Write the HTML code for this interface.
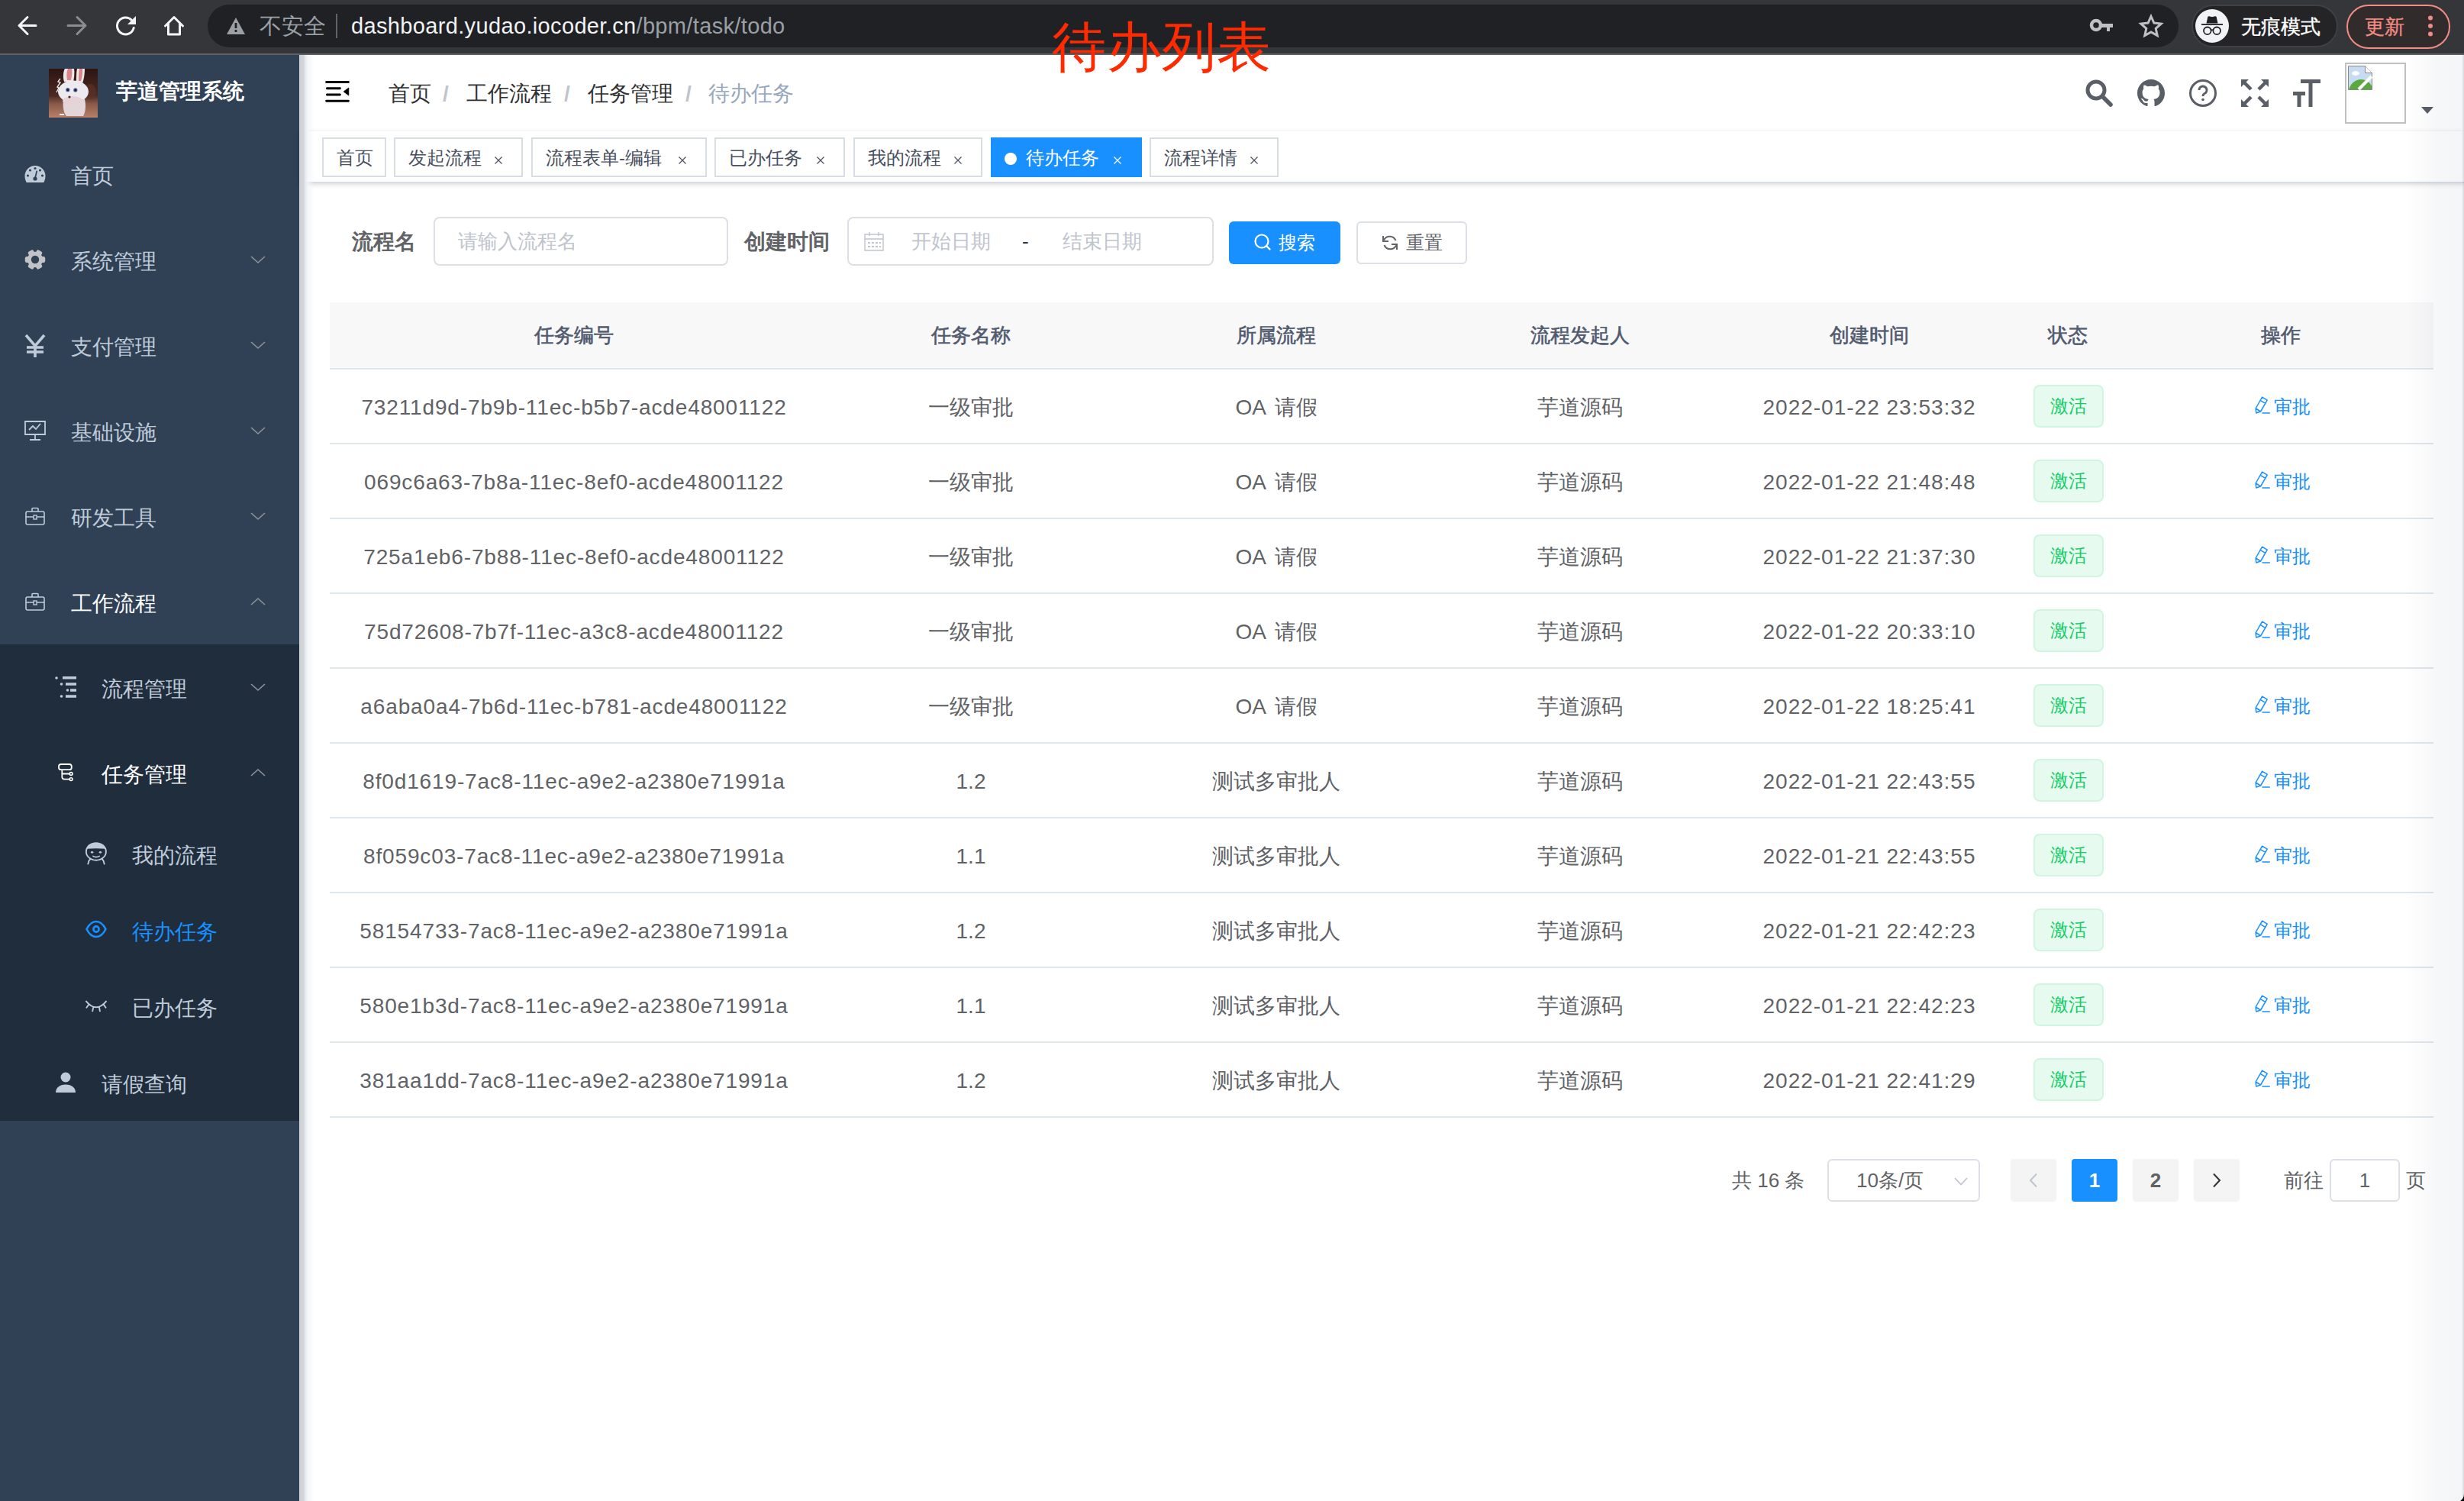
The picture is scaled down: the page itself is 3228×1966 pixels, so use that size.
<!DOCTYPE html>
<html><head><meta charset="utf-8">
<style>
*{box-sizing:border-box}
html,body{margin:0;padding:0}
body{width:3228px;height:1966px;position:relative;overflow:hidden;background:#fff;font-family:"Liberation Sans",sans-serif;color:#606266}
.a{position:absolute;white-space:nowrap}
svg{position:absolute;overflow:visible}
/* chrome */
#tb{left:0;top:0;width:3228px;height:70px;background:#35363a}
#tbl{left:0;top:70px;width:3228px;height:2px;background:#5f6064}
#omni{left:272px;top:6px;width:2582px;height:56px;border-radius:28px;background:#202124}
/* sidebar */
#side{left:0;top:72px;width:392px;height:1894px;background:#304156}
#sub{left:0;top:844px;width:392px;height:624px;background:#1f2d3d}
#sideshadow{left:392px;top:72px;width:20px;height:1894px;z-index:5;background:linear-gradient(to right,#cdd0d4 0px,#d3d6da 6px,#e6e9ee 8px,rgba(242,244,247,.8) 11px,rgba(255,255,255,0) 20px)}
.mi{font-size:28px;color:#bfcbd9;line-height:40px}
.chev{width:20px;height:10px}
/* navbar */
.bc{font-size:28px;color:#303133;line-height:40px;top:103px}
.sep{font-size:28px;color:#c0c4cc;line-height:40px;top:103px;font-weight:700}
.ni{color:#5a5e66}
/* tags */
#tagbar{left:392px;top:172px;width:2836px;height:68px;background:#fff;border-bottom:2px solid #d8dce5;box-shadow:0 2px 6px 0 rgba(0,0,0,.12),0 0 6px 0 rgba(0,0,0,.04)}
#navsh{left:392px;top:72px;width:2836px;height:100px;background:#fff;box-shadow:0 2px 2px rgba(0,21,41,.05)}
.tag{position:absolute;top:180px;height:52px;border:2px solid #d8dce5;background:#fff;color:#495060;font-size:24px;line-height:50px;padding-left:17px;white-space:nowrap}
.tag .x{position:absolute;font-size:22px;top:0}
/* form */
.lbl{font-size:28px;color:#606266;line-height:40px;-webkit-text-stroke:1px #606266}
.inp{border:2px solid #dcdfe6;border-radius:8px;background:#fff}
.ph{font-size:26px;color:#c0c4cc;line-height:40px}
/* table */
.th{font-size:26px;color:#515a6e;line-height:40px;text-align:center;-webkit-text-stroke:0.6px #515a6e}
.td{font-size:28px;color:#606266;line-height:40px;text-align:center}
.hl{height:2px;background:#dfe6ec;left:432px;width:2756px}
.stag{position:absolute;width:92px;height:56px;border:2px solid #d0f5e0;background:#e7faf0;border-radius:8px;color:#13ce66;font-size:24px;line-height:52px;text-align:center}
.op{color:#1890ff;font-size:24px;line-height:38px}
</style></head><body>

<!-- ===== Browser chrome ===== -->
<div class="a" id="tb"></div>
<div class="a" id="tbl"></div>
<!-- back -->
<svg style="left:21px;top:19px" width="30" height="30" viewBox="0 0 30 30"><path d="M26 14.5H4.5M15 3.5L4 14.5l11 11" fill="none" stroke="#f4f5f6" stroke-width="3" stroke-linecap="round" stroke-linejoin="round"/></svg>
<!-- forward -->
<svg style="left:85px;top:19px" width="30" height="30" viewBox="0 0 30 30"><path d="M4 14.5h21.5M16 3.5l11 11-11 11" fill="none" stroke="#8c8d90" stroke-width="3" stroke-linecap="round" stroke-linejoin="round"/></svg>
<!-- reload -->
<svg style="left:150px;top:18px" width="30" height="30" viewBox="0 0 30 30"><path d="M23 9A11 11 0 1 0 25.2 18.5" fill="none" stroke="#f4f5f6" stroke-width="3" stroke-linecap="round"/><path d="M28 3v11H17z" fill="#f4f5f6"/></svg>
<!-- home -->
<svg style="left:214px;top:20px" width="30" height="30" viewBox="0 0 30 30"><path d="M2.5 14L14 2.5 25.5 14M6.5 11v14h15V11" fill="none" stroke="#f4f5f6" stroke-width="3" stroke-linecap="round" stroke-linejoin="round"/></svg>
<div class="a" id="omni"></div>
<!-- warning -->
<svg style="left:296px;top:22px" width="26" height="24" viewBox="0 0 26 24"><path d="M13 1L25 23H1z" fill="#9aa0a6"/><rect x="11.6" y="8" width="2.8" height="7" fill="#202124"/><rect x="11.6" y="17" width="2.8" height="3" fill="#202124"/></svg>
<div class="a" style="left:340px;top:14px;font-size:29px;line-height:40px;color:#9aa0a6">不安全</div>
<div class="a" style="left:440px;top:18px;width:2px;height:32px;background:#5f6368"></div>
<div class="a" style="left:460px;top:14px;font-size:29px;line-height:40px;color:#f1f3f4;letter-spacing:0.35px">dashboard.yudao.iocoder.cn<span style="color:#9aa0a6">/bpm/task/todo</span></div>
<!-- key -->
<svg style="left:2738px;top:24px" width="32" height="18" viewBox="0 0 32 18"><circle cx="8" cy="9" r="6" fill="none" stroke="#bdc1c6" stroke-width="4.5"/><path d="M13 7h17v5h-4v5h-4v-5h-9z" fill="#bdc1c6"/></svg>
<!-- star -->
<svg style="left:2802px;top:19px" width="32" height="30" viewBox="0 0 32 30"><path d="M16 2.5l3.9 8.6 9.3 1-7 6.3 2 9.2L16 22.9l-8.2 4.7 2-9.2-7-6.3 9.3-1z" fill="none" stroke="#bdc1c6" stroke-width="3" stroke-linejoin="miter"/></svg>
<!-- incognito pill -->
<div class="a" style="left:2871px;top:6px;width:192px;height:56px;border-radius:28px;background:#242427;border:2px solid #3f4043"></div>
<div class="a" style="left:2876px;top:12px;width:44px;height:44px;border-radius:22px;background:#f1f3f4"></div>
<svg style="left:2876px;top:12px" width="44" height="44" viewBox="0 0 44 44"><path d="M14.5 18.5l1.8-8.3c.2-.8.9-1.2 1.7-1l3 .8c.6.2 1.4.2 2 0l3-.8c.8-.2 1.5.2 1.7 1l1.8 8.3z" fill="#202124"/><rect x="8" y="19.2" width="28" height="1.8" fill="#202124"/><circle cx="15.8" cy="28.3" r="4.8" fill="none" stroke="#202124" stroke-width="1.8"/><circle cx="28.2" cy="28.3" r="4.8" fill="none" stroke="#202124" stroke-width="1.8"/><path d="M20.6 27.5q1.4-1 2.8 0" fill="none" stroke="#202124" stroke-width="1.6"/></svg>
<div class="a" style="left:2936px;top:15px;font-size:26px;line-height:40px;color:#fff;-webkit-text-stroke:0.4px #fff">无痕模式</div>
<!-- update pill -->
<div class="a" style="left:3074px;top:6px;width:136px;height:58px;border-radius:29px;background:#322b2c;border:2.5px solid #f28b82"></div>
<div class="a" style="left:3098px;top:15px;font-size:26px;line-height:40px;color:#f28b82;-webkit-text-stroke:0.3px #f28b82">更新</div>
<svg style="left:3178px;top:19px" width="12" height="30" viewBox="0 0 12 30"><circle cx="6" cy="4.5" r="3" fill="#f28b82"/><circle cx="6" cy="15" r="3" fill="#f28b82"/><circle cx="6" cy="25.5" r="3" fill="#f28b82"/></svg>

<!-- ===== Sidebar ===== -->
<div class="a" id="side"></div>
<div class="a" id="sub"></div>
<div class="a" id="sideshadow"></div>
<!-- logo -->
<svg style="left:64px;top:90px" width="64" height="64" viewBox="0 0 64 64"><defs><linearGradient id="lg" x1="0" y1="0" x2="0" y2="1"><stop offset="0" stop-color="#2e1512"/><stop offset=".55" stop-color="#4a2a22"/><stop offset=".72" stop-color="#8a5a48"/><stop offset="1" stop-color="#b98068"/></linearGradient></defs><rect width="64" height="64" fill="url(#lg)"/><ellipse cx="54" cy="30" rx="8" ry="10" fill="#5a3228" opacity=".7"/><path d="M20 17c-2-6-1-14 1-17h12c1 5 0 12-1 18z" fill="#ece8ea"/><path d="M24 15c-1-5-1-11 1-15h5c1 4 0 10-1 15z" fill="#d9858a"/><path d="M36 18c0-6 0-14 1-18h10c0 6-1 14-3 19z" fill="#ece8ea"/><path d="M39 16c0-5 0-11 1-16h4c0 5 0 11-2 16z" fill="#d9858a"/><ellipse cx="32" cy="30" rx="20" ry="14.5" fill="#eceaee"/><path d="M19 40c-1 8 0 18 4 22h22c3-5 4-14 2-22z" fill="#e3d6da"/><ellipse cx="31" cy="42" rx="13" ry="6" fill="#e5d3d7"/><circle cx="24.8" cy="27.7" r="2.6" fill="#4b6a9a"/><circle cx="24.8" cy="27.7" r="1.5" fill="#1a1a2a"/><circle cx="34.8" cy="27.9" r="2.6" fill="#4b6a9a"/><circle cx="34.8" cy="27.9" r="1.5" fill="#1a1a2a"/><circle cx="27" cy="37" r="1.6" fill="#5a2222"/><path d="M15 13l-3 4 3 1-4 6 2 1-3 6" fill="none" stroke="#e8e8e8" stroke-width="1.4"/><path d="M14 60h6" stroke="#eee" stroke-width="2"/></svg>
<div class="a" style="left:152px;top:100px;font-size:28px;line-height:40px;color:#fff;-webkit-text-stroke:0.9px #fff">芋道管理系统</div>

<!-- menu items -->
<!-- 首页 -->
<svg style="left:32px;top:216px" width="28" height="24" viewBox="0 0 28 24"><path d="M14 1A13.5 13.5 0 0 0 .5 14.5c0 3 .8 5.8 2.2 8.5h22.6c1.4-2.7 2.2-5.5 2.2-8.5A13.5 13.5 0 0 0 14 1z" fill="#bfcbd9"/><g fill="#304156"><circle cx="4.5" cy="14" r="1.6"/><circle cx="7.5" cy="7" r="1.6"/><circle cx="14" cy="4.5" r="1.6"/><circle cx="20.5" cy="7" r="1.6"/><circle cx="23.5" cy="14" r="1.6"/><circle cx="14" cy="18" r="2.6"/><path d="M13 17.5l2.5-10 1.6.4-2.3 10z"/></g></svg>
<div class="a mi" style="left:93px;top:211px">首页</div>
<!-- 系统管理 -->
<svg style="left:32px;top:326px" width="28" height="28" viewBox="0 0 28 28"><g fill="#c2c3c6"><circle cx="14" cy="14" r="10.2"/><rect x="10" y="0.8" width="8" height="8" rx="2.2" transform="rotate(30 14 14)"/><rect x="10" y="0.8" width="8" height="8" rx="2.2" transform="rotate(90 14 14)"/><rect x="10" y="0.8" width="8" height="8" rx="2.2" transform="rotate(150 14 14)"/><rect x="10" y="0.8" width="8" height="8" rx="2.2" transform="rotate(210 14 14)"/><rect x="10" y="0.8" width="8" height="8" rx="2.2" transform="rotate(270 14 14)"/><rect x="10" y="0.8" width="8" height="8" rx="2.2" transform="rotate(330 14 14)"/></g><circle cx="14" cy="14" r="5.2" fill="#304156"/></svg>
<div class="a mi" style="left:93px;top:323px">系统管理</div>
<svg class="chev" style="left:328px;top:335px" viewBox="0 0 20 10"><path d="M1 1l9 8 9-8" fill="none" stroke="#909399" stroke-width="1.6"/></svg>
<!-- 支付管理 -->
<svg style="left:32px;top:438px" width="28" height="30" viewBox="0 0 28 30"><path d="M2 1l12 14L26 1M14 15v15M3 17h22M3 23h22" fill="none" stroke="#bfcbd9" stroke-width="3.6"/></svg>
<div class="a mi" style="left:93px;top:435px">支付管理</div>
<svg class="chev" style="left:328px;top:447px" viewBox="0 0 20 10"><path d="M1 1l9 8 9-8" fill="none" stroke="#909399" stroke-width="1.6"/></svg>
<!-- 基础设施 -->
<svg style="left:32px;top:551px" width="28" height="26" viewBox="0 0 28 26"><path d="M1 1h26v17H1zM14 18v7M7 25h14" fill="none" stroke="#bfcbd9" stroke-width="1.8"/><path d="M6 12l5-5 4 4 6-7" fill="none" stroke="#bfcbd9" stroke-width="1.8"/></svg>
<div class="a mi" style="left:93px;top:547px">基础设施</div>
<svg class="chev" style="left:328px;top:559px" viewBox="0 0 20 10"><path d="M1 1l9 8 9-8" fill="none" stroke="#909399" stroke-width="1.6"/></svg>
<!-- 研发工具 -->
<svg style="left:33px;top:664px" width="26" height="24" viewBox="0 0 26 24"><rect x="1" y="6" width="24" height="17" rx="2" fill="none" stroke="#bfcbd9" stroke-width="1.6"/><path d="M9 6V2.5a1 1 0 0 1 1-1h6a1 1 0 0 1 1 1V6M1 13h24" fill="none" stroke="#bfcbd9" stroke-width="1.6"/><rect x="11" y="11" width="4" height="5" fill="#304156" stroke="#bfcbd9" stroke-width="1.4"/></svg>
<div class="a mi" style="left:93px;top:659px">研发工具</div>
<svg class="chev" style="left:328px;top:671px" viewBox="0 0 20 10"><path d="M1 1l9 8 9-8" fill="none" stroke="#909399" stroke-width="1.6"/></svg>
<!-- 工作流程 -->
<svg style="left:33px;top:776px" width="26" height="24" viewBox="0 0 26 24"><rect x="1" y="6" width="24" height="17" rx="2" fill="none" stroke="#bfcbd9" stroke-width="1.6"/><path d="M9 6V2.5a1 1 0 0 1 1-1h6a1 1 0 0 1 1 1V6M1 13h24" fill="none" stroke="#bfcbd9" stroke-width="1.6"/><rect x="11" y="11" width="4" height="5" fill="#304156" stroke="#bfcbd9" stroke-width="1.4"/></svg>
<div class="a mi" style="left:93px;top:771px;color:#fff">工作流程</div>
<svg class="chev" style="left:328px;top:783px" viewBox="0 0 20 10"><path d="M1 9l9-8 9 8" fill="none" stroke="#909399" stroke-width="1.6"/></svg>
<!-- 流程管理 -->
<svg style="left:72px;top:886px" width="28" height="28" viewBox="0 0 28 28"><g fill="#bfcbd9"><circle cx="2" cy="2" r="1.8"/><rect x="10" y="0" width="18" height="3.5"/><circle cx="8.5" cy="10" r="1.8"/><rect x="14" y="8.3" width="14" height="3.5"/><circle cx="16.5" cy="18" r="1.8"/><rect x="20" y="16.3" width="8" height="3.5"/><circle cx="8.5" cy="26" r="1.8"/><rect x="14" y="24.3" width="14" height="3.5"/></g></svg>
<div class="a mi" style="left:133px;top:883px">流程管理</div>
<svg class="chev" style="left:328px;top:895px" viewBox="0 0 20 10"><path d="M1 1l9 8 9-8" fill="none" stroke="#909399" stroke-width="1.6"/></svg>
<!-- 任务管理 -->
<svg style="left:66px;top:990px" width="40" height="45" viewBox="0 0 40 45"><rect x="11" y="11" width="16.8" height="7.2" rx="3" fill="none" stroke="#fff" stroke-width="1.8"/><path d="M15.3 18.2v9.2q0 3.2 3.2 3.2h6.8M15.3 23.5h10" fill="none" stroke="#fff" stroke-width="1.8"/><circle cx="27.1" cy="23.5" r="1.9" fill="none" stroke="#fff" stroke-width="1.6"/><circle cx="27.1" cy="30.6" r="1.9" fill="none" stroke="#fff" stroke-width="1.6"/></svg>
<div class="a mi" style="left:133px;top:995px;color:#fff">任务管理</div>
<svg class="chev" style="left:328px;top:1007px" viewBox="0 0 20 10"><path d="M1 9l9-8 9 8" fill="none" stroke="#909399" stroke-width="1.6"/></svg>
<!-- 我的流程 -->
<svg style="left:106px;top:1095px" width="40" height="45" viewBox="0 0 40 45"><ellipse cx="19.9" cy="20.4" rx="13" ry="11.3" fill="none" stroke="#bfcbd9" stroke-width="1.9"/><path d="M7 16.8Q19.9 15.6 32.8 16.8 31 9.1 19.9 9.1 8.8 9.1 7 16.8z" fill="#bfcbd9"/><ellipse cx="14.6" cy="21.3" rx="1.7" ry="1.4" fill="#bfcbd9"/><ellipse cx="25.4" cy="21.3" rx="1.7" ry="1.4" fill="#bfcbd9"/><path d="M15.8 26.4q4.1 2.4 8.4 0" fill="none" stroke="#bfcbd9" stroke-width="1.6" stroke-linecap="round"/><path d="M12.5 29.8Q10 32 9.3 36.6M27.5 29.8Q30 32 30.7 36.6" fill="none" stroke="#bfcbd9" stroke-width="1.9" stroke-linecap="round"/></svg>
<div class="a mi" style="left:173px;top:1101px">我的流程</div>
<!-- 待办任务 -->
<svg style="left:112px;top:1205px" width="28" height="24" viewBox="0 0 28 24"><path d="M1.5 12C5 5 9.5 2 14 2s9 3 12.5 10C23 19 18.5 22 14 22S5 19 1.5 12z" fill="none" stroke="#1890ff" stroke-width="2.6"/><circle cx="14" cy="12" r="3.6" fill="none" stroke="#1890ff" stroke-width="2.6"/></svg>
<div class="a mi" style="left:173px;top:1201px;color:#1890ff">待办任务</div>
<!-- 已办任务 -->
<svg style="left:106px;top:1300px" width="40" height="40" viewBox="0 0 40 40"><path d="M7 11.6Q20 27 33 11.6M10.3 15.6L7.4 19.8M29.7 15.6l2.9 4.2M16.2 19.4l-1 5M24 19.4l.9 5" fill="none" stroke="#bfcbd9" stroke-width="1.9" stroke-linecap="round"/></svg>
<div class="a mi" style="left:173px;top:1301px">已办任务</div>
<!-- 请假查询 -->
<svg style="left:72px;top:1404px" width="28" height="28" viewBox="0 0 28 28"><circle cx="14" cy="7" r="6.5" fill="#bfcbd9"/><path d="M1 27c0-6 5-10.5 13-10.5S27 21 27 27z" fill="#bfcbd9"/></svg>
<div class="a mi" style="left:133px;top:1401px">请假查询</div>

<!-- ===== Navbar ===== -->
<div class="a" id="navsh"></div>
<svg style="left:415px;top:95px" width="55" height="50" viewBox="0 0 55 50"><path d="M12.6 12.5h28.8M13.4 20.8h17M13.4 29h17M12.6 37.3h28.8" stroke="#000" stroke-width="2.9" stroke-linecap="round"/><path d="M41.8 20v10l-6.6-5z" fill="#000" stroke="#000" stroke-width="0.8" stroke-linejoin="round"/></svg>
<div class="a bc" style="left:509px;color:#303133">首页</div>
<div class="a bc" style="left:611px;color:#303133">工作流程</div>
<div class="a bc" style="left:770px;color:#303133">任务管理</div>
<div class="a bc" style="left:928px;color:#97a8be">待办任务</div>
<div class="a sep" style="left:580px">/</div>
<div class="a sep" style="left:739px">/</div>
<div class="a sep" style="left:898px">/</div>
<svg style="left:2732px;top:104px" width="36" height="36" viewBox="0 0 36 36"><circle cx="14" cy="14" r="11" fill="none" stroke="#5a5e66" stroke-width="5"/><path d="M22 22l11 11" stroke="#5a5e66" stroke-width="5.5" stroke-linecap="round"/></svg>
<svg style="left:2800px;top:104px" width="36" height="36" viewBox="0 0 16 16"><path fill="#5a5e66" d="M8 0C3.58 0 0 3.58 0 8c0 3.54 2.29 6.53 5.47 7.59.4.07.55-.17.55-.38 0-.19-.01-.82-.01-1.49-2.01.37-2.53-.49-2.69-.94-.09-.23-.48-.94-.82-1.13-.28-.15-.68-.52-.01-.53.63-.01 1.08.58 1.23.82.72 1.21 1.87.87 2.33.66.07-.52.28-.87.51-1.07-1.78-.2-3.64-.89-3.64-3.95 0-.87.31-1.59.82-2.15-.08-.2-.36-1.02.08-2.12 0 0 .67-.21 2.2.82.64-.18 1.32-.27 2-.27.68 0 1.36.09 2 .27 1.53-1.04 2.2-.82 2.2-.82.44 1.1.16 1.92.08 2.12.51.56.82 1.27.82 2.15 0 3.07-1.87 3.75-3.65 3.95.29.25.54.73.54 1.48 0 1.07-.01 1.93-.01 2.2 0 .21.15.46.55.38A8.013 8.013 0 0 0 16 8c0-4.42-3.58-8-8-8z"/></svg>
<svg style="left:2868px;top:104px" width="36" height="36" viewBox="0 0 36 36"><circle cx="18" cy="18" r="16.5" fill="none" stroke="#5a5e66" stroke-width="3"/><path d="M13 14a5 5 0 1 1 7 4.5c-1.5.8-2 1.5-2 3.5" fill="none" stroke="#5a5e66" stroke-width="3"/><circle cx="18" cy="26.5" r="1.8" fill="#5a5e66"/></svg>
<svg style="left:2936px;top:104px" width="36" height="36" viewBox="0 0 36 36"><g fill="#5a5e66"><path d="M0 0h10L0 10z"/><path d="M36 0H26l10 10z"/><path d="M0 36h10L0 26z"/><path d="M36 36H26l10-10z"/></g><g stroke="#5a5e66" stroke-width="4.5"><path d="M3 3l10 10M33 3L23 13M3 33l10-10M33 33L23 23"/></g></svg>
<svg style="left:3004px;top:104px" width="36" height="36" viewBox="0 0 36 36"><g fill="#5a5e66"><rect x="10" y="0" width="26" height="5"/><rect x="20.5" y="0" width="5" height="36"/><rect x="0" y="16" width="16" height="5"/><rect x="5.5" y="16" width="5" height="20"/></g></svg>
<div class="a" style="left:3072px;top:82px;width:80px;height:80px;border:2px solid #c0c0c0;background:#fff"></div>
<svg style="left:3076px;top:86px" width="32" height="32" viewBox="0 0 32 32"><path d="M.5.5h22l9 9v22H.5z" fill="#c7dcf2" stroke="#8a8a8a" stroke-width="1"/><path d="M22.5.5v9h9" fill="#fff" stroke="#8a8a8a" stroke-width="1"/><path d="M1 31c3-8 9-13 16-13s12 4 14 9v4z" fill="#5aa93e"/><path d="M31 14L14 31" stroke="#fff" stroke-width="4"/><ellipse cx="10" cy="10" rx="5" ry="3" fill="#fff"/></svg>
<svg style="left:3172px;top:140px" width="16" height="9" viewBox="0 0 16 9"><path d="M0 0h16L8 9z" fill="#5a5e66"/></svg>
<!-- ===== Tags ===== -->
<div class="a" id="tagbar"></div>
<div class="tag" style="left:422px;width:84px;">首页</div>
<div class="tag" style="left:516px;width:169px;">发起流程<svg style="left:130px;top:23px" width="10" height="10" viewBox="0 0 10 10"><path d="M.5.5l9 9M9.5.5l-9 9" stroke="currentColor" stroke-width="1.15"/></svg></div>
<div class="tag" style="left:696px;width:230px;">流程表单-编辑<svg style="left:191px;top:23px" width="10" height="10" viewBox="0 0 10 10"><path d="M.5.5l9 9M9.5.5l-9 9" stroke="currentColor" stroke-width="1.15"/></svg></div>
<div class="tag" style="left:936px;width:171px;">已办任务<svg style="left:132px;top:23px" width="10" height="10" viewBox="0 0 10 10"><path d="M.5.5l9 9M9.5.5l-9 9" stroke="currentColor" stroke-width="1.15"/></svg></div>
<div class="tag" style="left:1118px;width:169px;">我的流程<svg style="left:130px;top:23px" width="10" height="10" viewBox="0 0 10 10"><path d="M.5.5l9 9M9.5.5l-9 9" stroke="currentColor" stroke-width="1.15"/></svg></div>
<div class="tag" style="left:1298px;width:198px;background:#1890ff;border-color:#1890ff;color:#fff;padding-left:44px;"><span style="position:absolute;left:16px;top:18px;width:16px;height:16px;border-radius:8px;background:#fff"></span>待办任务<svg style="left:159px;top:23px" width="10" height="10" viewBox="0 0 10 10"><path d="M.5.5l9 9M9.5.5l-9 9" stroke="currentColor" stroke-width="1.15"/></svg></div>
<div class="tag" style="left:1506px;width:169px;">流程详情<svg style="left:130px;top:23px" width="10" height="10" viewBox="0 0 10 10"><path d="M.5.5l9 9M9.5.5l-9 9" stroke="currentColor" stroke-width="1.15"/></svg></div>
<!-- ===== Form ===== -->
<div class="a lbl" style="left:461px;top:297px">流程名</div>
<div class="a inp" style="left:568px;top:284px;width:386px;height:64px"></div>
<div class="a ph" style="left:600px;top:296px">请输入流程名</div>
<div class="a lbl" style="left:975px;top:297px">创建时间</div>
<div class="a inp" style="left:1110px;top:284px;width:480px;height:64px"></div>
<svg style="left:1132px;top:303px" width="26" height="26" viewBox="0 0 26 26"><path d="M1 4h24v21H1zM1 10h24M7 1v5M19 1v5" fill="none" stroke="#c0c4cc" stroke-width="1.4"/><g fill="#c0c4cc"><rect x="5" y="14" width="3" height="2"/><rect x="10" y="14" width="3" height="2"/><rect x="15" y="14" width="3" height="2"/><rect x="20" y="14" width="2" height="2"/><rect x="5" y="19" width="3" height="2"/><rect x="10" y="19" width="3" height="2"/><rect x="15" y="19" width="3" height="2"/><rect x="20" y="19" width="2" height="2"/></g></svg>
<div class="a ph" style="left:1194px;top:296px">开始日期</div>
<div class="a" style="left:1339px;top:296px;font-size:26px;line-height:40px;color:#303133">-</div>
<div class="a ph" style="left:1392px;top:296px">结束日期</div>
<div class="a" style="left:1610px;top:290px;width:146px;height:56px;border-radius:6px;background:#1890ff"></div>
<svg style="left:1643px;top:306px" width="22" height="22" viewBox="0 0 22 22"><circle cx="10" cy="10" r="8.5" fill="none" stroke="#fff" stroke-width="2.2"/><path d="M16 16l4.5 4.5" stroke="#fff" stroke-width="2.4" stroke-linecap="round"/></svg>
<div class="a" style="left:1675px;top:298px;font-size:24px;line-height:40px;color:#fff">搜索</div>
<div class="a" style="left:1777px;top:290px;width:145px;height:56px;border-radius:6px;background:#fff;border:2px solid #dcdfe6"></div>
<svg style="left:1810px;top:307px" width="22" height="22" viewBox="0 0 22 22"><path d="M18.5 8A8.5 8.5 0 0 0 3 7.5M3.5 14a8.5 8.5 0 0 0 15.5.5" fill="none" stroke="#606266" stroke-width="2"/><path d="M2 2v7h7" fill="none" stroke="#606266" stroke-width="2"/><path d="M20 20v-7h-7" fill="none" stroke="#606266" stroke-width="2"/></svg>
<div class="a" style="left:1842px;top:298px;font-size:24px;line-height:40px;color:#606266">重置</div>
<!-- ===== Table ===== -->
<div class="a" style="left:432px;top:396px;width:2756px;height:86px;background:#f8f8f9"></div>
<div class="a hl" style="top:482px"></div>
<div class="a th" style="left:432px;width:640px;top:419px;">任务编号</div>
<div class="a th" style="left:1072px;width:400px;top:419px;">任务名称</div>
<div class="a th" style="left:1472px;width:400px;top:419px;">所属流程</div>
<div class="a th" style="left:1872px;width:396px;top:419px;">流程发起人</div>
<div class="a th" style="left:2268px;width:362px;top:419px;">创建时间</div>
<div class="a th" style="left:2630px;width:158px;top:419px;">状态</div>
<div class="a th" style="left:2788px;width:400px;top:419px;">操作</div>
<div class="a hl" style="top:580px"></div>
<div class="a td" style="left:432px;width:640px;top:514px;letter-spacing:0.86px">73211d9d-7b9b-11ec-b5b7-acde48001122</div>
<div class="a td" style="left:1072px;width:400px;top:514px;">一级审批</div>
<div class="a td" style="left:1472px;width:400px;top:514px;">OA<span style="margin-left:3px"> </span>请假</div>
<div class="a td" style="left:1872px;width:396px;top:514px;">芋道源码</div>
<div class="a td" style="left:2268px;width:362px;top:514px;letter-spacing:1px">2022-01-22 23:53:32</div>
<div class="stag" style="left:2664px;top:504px">激活</div>
<svg style="left:2945px;top:510px" width="40" height="40" viewBox="0 0 40 40"><path d="M18.6 10.2L25.2 14.2 16.6 29 10.1 25zM10.1 25l.7 6 5.8-2M16.4 14.6l6.4 3.8M18.5 31h10.3" fill="none" stroke="#1890ff" stroke-width="1.5" stroke-linejoin="round"/></svg>
<div class="a op" style="left:2979px;top:514px">审批</div>
<div class="a hl" style="top:678px"></div>
<div class="a td" style="left:432px;width:640px;top:612px;letter-spacing:0.86px">069c6a63-7b8a-11ec-8ef0-acde48001122</div>
<div class="a td" style="left:1072px;width:400px;top:612px;">一级审批</div>
<div class="a td" style="left:1472px;width:400px;top:612px;">OA<span style="margin-left:3px"> </span>请假</div>
<div class="a td" style="left:1872px;width:396px;top:612px;">芋道源码</div>
<div class="a td" style="left:2268px;width:362px;top:612px;letter-spacing:1px">2022-01-22 21:48:48</div>
<div class="stag" style="left:2664px;top:602px">激活</div>
<svg style="left:2945px;top:608px" width="40" height="40" viewBox="0 0 40 40"><path d="M18.6 10.2L25.2 14.2 16.6 29 10.1 25zM10.1 25l.7 6 5.8-2M16.4 14.6l6.4 3.8M18.5 31h10.3" fill="none" stroke="#1890ff" stroke-width="1.5" stroke-linejoin="round"/></svg>
<div class="a op" style="left:2979px;top:612px">审批</div>
<div class="a hl" style="top:776px"></div>
<div class="a td" style="left:432px;width:640px;top:710px;letter-spacing:0.86px">725a1eb6-7b88-11ec-8ef0-acde48001122</div>
<div class="a td" style="left:1072px;width:400px;top:710px;">一级审批</div>
<div class="a td" style="left:1472px;width:400px;top:710px;">OA<span style="margin-left:3px"> </span>请假</div>
<div class="a td" style="left:1872px;width:396px;top:710px;">芋道源码</div>
<div class="a td" style="left:2268px;width:362px;top:710px;letter-spacing:1px">2022-01-22 21:37:30</div>
<div class="stag" style="left:2664px;top:700px">激活</div>
<svg style="left:2945px;top:706px" width="40" height="40" viewBox="0 0 40 40"><path d="M18.6 10.2L25.2 14.2 16.6 29 10.1 25zM10.1 25l.7 6 5.8-2M16.4 14.6l6.4 3.8M18.5 31h10.3" fill="none" stroke="#1890ff" stroke-width="1.5" stroke-linejoin="round"/></svg>
<div class="a op" style="left:2979px;top:710px">审批</div>
<div class="a hl" style="top:874px"></div>
<div class="a td" style="left:432px;width:640px;top:808px;letter-spacing:0.86px">75d72608-7b7f-11ec-a3c8-acde48001122</div>
<div class="a td" style="left:1072px;width:400px;top:808px;">一级审批</div>
<div class="a td" style="left:1472px;width:400px;top:808px;">OA<span style="margin-left:3px"> </span>请假</div>
<div class="a td" style="left:1872px;width:396px;top:808px;">芋道源码</div>
<div class="a td" style="left:2268px;width:362px;top:808px;letter-spacing:1px">2022-01-22 20:33:10</div>
<div class="stag" style="left:2664px;top:798px">激活</div>
<svg style="left:2945px;top:804px" width="40" height="40" viewBox="0 0 40 40"><path d="M18.6 10.2L25.2 14.2 16.6 29 10.1 25zM10.1 25l.7 6 5.8-2M16.4 14.6l6.4 3.8M18.5 31h10.3" fill="none" stroke="#1890ff" stroke-width="1.5" stroke-linejoin="round"/></svg>
<div class="a op" style="left:2979px;top:808px">审批</div>
<div class="a hl" style="top:972px"></div>
<div class="a td" style="left:432px;width:640px;top:906px;letter-spacing:0.86px">a6aba0a4-7b6d-11ec-b781-acde48001122</div>
<div class="a td" style="left:1072px;width:400px;top:906px;">一级审批</div>
<div class="a td" style="left:1472px;width:400px;top:906px;">OA<span style="margin-left:3px"> </span>请假</div>
<div class="a td" style="left:1872px;width:396px;top:906px;">芋道源码</div>
<div class="a td" style="left:2268px;width:362px;top:906px;letter-spacing:1px">2022-01-22 18:25:41</div>
<div class="stag" style="left:2664px;top:896px">激活</div>
<svg style="left:2945px;top:902px" width="40" height="40" viewBox="0 0 40 40"><path d="M18.6 10.2L25.2 14.2 16.6 29 10.1 25zM10.1 25l.7 6 5.8-2M16.4 14.6l6.4 3.8M18.5 31h10.3" fill="none" stroke="#1890ff" stroke-width="1.5" stroke-linejoin="round"/></svg>
<div class="a op" style="left:2979px;top:906px">审批</div>
<div class="a hl" style="top:1070px"></div>
<div class="a td" style="left:432px;width:640px;top:1004px;letter-spacing:0.86px">8f0d1619-7ac8-11ec-a9e2-a2380e71991a</div>
<div class="a td" style="left:1072px;width:400px;top:1004px;">1.2</div>
<div class="a td" style="left:1472px;width:400px;top:1004px;">测试多审批人</div>
<div class="a td" style="left:1872px;width:396px;top:1004px;">芋道源码</div>
<div class="a td" style="left:2268px;width:362px;top:1004px;letter-spacing:1px">2022-01-21 22:43:55</div>
<div class="stag" style="left:2664px;top:994px">激活</div>
<svg style="left:2945px;top:1000px" width="40" height="40" viewBox="0 0 40 40"><path d="M18.6 10.2L25.2 14.2 16.6 29 10.1 25zM10.1 25l.7 6 5.8-2M16.4 14.6l6.4 3.8M18.5 31h10.3" fill="none" stroke="#1890ff" stroke-width="1.5" stroke-linejoin="round"/></svg>
<div class="a op" style="left:2979px;top:1004px">审批</div>
<div class="a hl" style="top:1168px"></div>
<div class="a td" style="left:432px;width:640px;top:1102px;letter-spacing:0.86px">8f059c03-7ac8-11ec-a9e2-a2380e71991a</div>
<div class="a td" style="left:1072px;width:400px;top:1102px;">1.1</div>
<div class="a td" style="left:1472px;width:400px;top:1102px;">测试多审批人</div>
<div class="a td" style="left:1872px;width:396px;top:1102px;">芋道源码</div>
<div class="a td" style="left:2268px;width:362px;top:1102px;letter-spacing:1px">2022-01-21 22:43:55</div>
<div class="stag" style="left:2664px;top:1092px">激活</div>
<svg style="left:2945px;top:1098px" width="40" height="40" viewBox="0 0 40 40"><path d="M18.6 10.2L25.2 14.2 16.6 29 10.1 25zM10.1 25l.7 6 5.8-2M16.4 14.6l6.4 3.8M18.5 31h10.3" fill="none" stroke="#1890ff" stroke-width="1.5" stroke-linejoin="round"/></svg>
<div class="a op" style="left:2979px;top:1102px">审批</div>
<div class="a hl" style="top:1266px"></div>
<div class="a td" style="left:432px;width:640px;top:1200px;letter-spacing:0.86px">58154733-7ac8-11ec-a9e2-a2380e71991a</div>
<div class="a td" style="left:1072px;width:400px;top:1200px;">1.2</div>
<div class="a td" style="left:1472px;width:400px;top:1200px;">测试多审批人</div>
<div class="a td" style="left:1872px;width:396px;top:1200px;">芋道源码</div>
<div class="a td" style="left:2268px;width:362px;top:1200px;letter-spacing:1px">2022-01-21 22:42:23</div>
<div class="stag" style="left:2664px;top:1190px">激活</div>
<svg style="left:2945px;top:1196px" width="40" height="40" viewBox="0 0 40 40"><path d="M18.6 10.2L25.2 14.2 16.6 29 10.1 25zM10.1 25l.7 6 5.8-2M16.4 14.6l6.4 3.8M18.5 31h10.3" fill="none" stroke="#1890ff" stroke-width="1.5" stroke-linejoin="round"/></svg>
<div class="a op" style="left:2979px;top:1200px">审批</div>
<div class="a hl" style="top:1364px"></div>
<div class="a td" style="left:432px;width:640px;top:1298px;letter-spacing:0.86px">580e1b3d-7ac8-11ec-a9e2-a2380e71991a</div>
<div class="a td" style="left:1072px;width:400px;top:1298px;">1.1</div>
<div class="a td" style="left:1472px;width:400px;top:1298px;">测试多审批人</div>
<div class="a td" style="left:1872px;width:396px;top:1298px;">芋道源码</div>
<div class="a td" style="left:2268px;width:362px;top:1298px;letter-spacing:1px">2022-01-21 22:42:23</div>
<div class="stag" style="left:2664px;top:1288px">激活</div>
<svg style="left:2945px;top:1294px" width="40" height="40" viewBox="0 0 40 40"><path d="M18.6 10.2L25.2 14.2 16.6 29 10.1 25zM10.1 25l.7 6 5.8-2M16.4 14.6l6.4 3.8M18.5 31h10.3" fill="none" stroke="#1890ff" stroke-width="1.5" stroke-linejoin="round"/></svg>
<div class="a op" style="left:2979px;top:1298px">审批</div>
<div class="a hl" style="top:1462px"></div>
<div class="a td" style="left:432px;width:640px;top:1396px;letter-spacing:0.86px">381aa1dd-7ac8-11ec-a9e2-a2380e71991a</div>
<div class="a td" style="left:1072px;width:400px;top:1396px;">1.2</div>
<div class="a td" style="left:1472px;width:400px;top:1396px;">测试多审批人</div>
<div class="a td" style="left:1872px;width:396px;top:1396px;">芋道源码</div>
<div class="a td" style="left:2268px;width:362px;top:1396px;letter-spacing:1px">2022-01-21 22:41:29</div>
<div class="stag" style="left:2664px;top:1386px">激活</div>
<svg style="left:2945px;top:1392px" width="40" height="40" viewBox="0 0 40 40"><path d="M18.6 10.2L25.2 14.2 16.6 29 10.1 25zM10.1 25l.7 6 5.8-2M16.4 14.6l6.4 3.8M18.5 31h10.3" fill="none" stroke="#1890ff" stroke-width="1.5" stroke-linejoin="round"/></svg>
<div class="a op" style="left:2979px;top:1396px">审批</div>
<!-- ===== Pagination ===== -->
<div class="a" style="left:2269px;top:1526px;font-size:26px;line-height:40px;color:#606266">共 16 条</div>
<div class="a inp" style="left:2394px;top:1518px;width:200px;height:56px;border-radius:6px"></div>
<div class="a" style="left:2432px;top:1526px;font-size:26px;line-height:40px;color:#606266">10条/页</div>
<svg style="left:2560px;top:1542px" width="18" height="11" viewBox="0 0 18 11"><path d="M1 1l8 8.5L17 1" fill="none" stroke="#c0c4cc" stroke-width="1.8"/></svg>
<div class="a" style="left:2634px;top:1518px;width:60px;height:56px;border-radius:4px;background:#f4f4f5"></div>
<div class="a" style="left:2714px;top:1518px;width:60px;height:56px;border-radius:4px;background:#1890ff"></div>
<div class="a" style="left:2794px;top:1518px;width:60px;height:56px;border-radius:4px;background:#f4f4f5"></div>
<div class="a" style="left:2874px;top:1518px;width:60px;height:56px;border-radius:4px;background:#f4f4f5"></div>
<svg style="left:2658px;top:1536px" width="12" height="20" viewBox="0 0 12 20"><path d="M10 1.5L2 10l8 8.5" fill="none" stroke="#c0c4cc" stroke-width="2"/></svg>
<svg style="left:2898px;top:1536px" width="12" height="20" viewBox="0 0 12 20"><path d="M2 1.5L10 10l-8 8.5" fill="none" stroke="#303133" stroke-width="2"/></svg>
<div class="a" style="left:2714px;top:1526px;width:60px;text-align:center;font-size:26px;line-height:40px;color:#fff;font-weight:700">1</div>
<div class="a" style="left:2794px;top:1526px;width:60px;text-align:center;font-size:26px;line-height:40px;color:#606266;font-weight:700">2</div>
<div class="a" style="left:2992px;top:1526px;font-size:26px;line-height:40px;color:#606266">前往</div>
<div class="a inp" style="left:3052px;top:1518px;width:92px;height:56px;border-radius:6px"></div>
<div class="a" style="left:3052px;top:1526px;width:92px;text-align:center;font-size:26px;line-height:40px;color:#606266">1</div>
<div class="a" style="left:3152px;top:1526px;font-size:26px;line-height:40px;color:#606266">页</div>
<div class="a" style="left:3150px;top:72px;width:78px;height:1894px;z-index:6;background:linear-gradient(to right,rgba(0,20,60,0),rgba(0,20,60,.03) 50%,rgba(0,20,60,.045))"></div><div class="a" style="left:3226px;top:72px;width:2px;height:1894px;z-index:6;background:rgba(0,10,40,.08)"></div>
<div class="a" style="left:1378px;top:19px;font-size:71px;line-height:86px;color:#ff2a00;letter-spacing:1px">待办列表</div>
<svg style="left:3220px;top:1957px;z-index:9" width="8" height="9" viewBox="0 0 8 9"><path d="M8 0v9H3C6 7 8 4 8 0z" fill="#000"/></svg>
</body></html>
